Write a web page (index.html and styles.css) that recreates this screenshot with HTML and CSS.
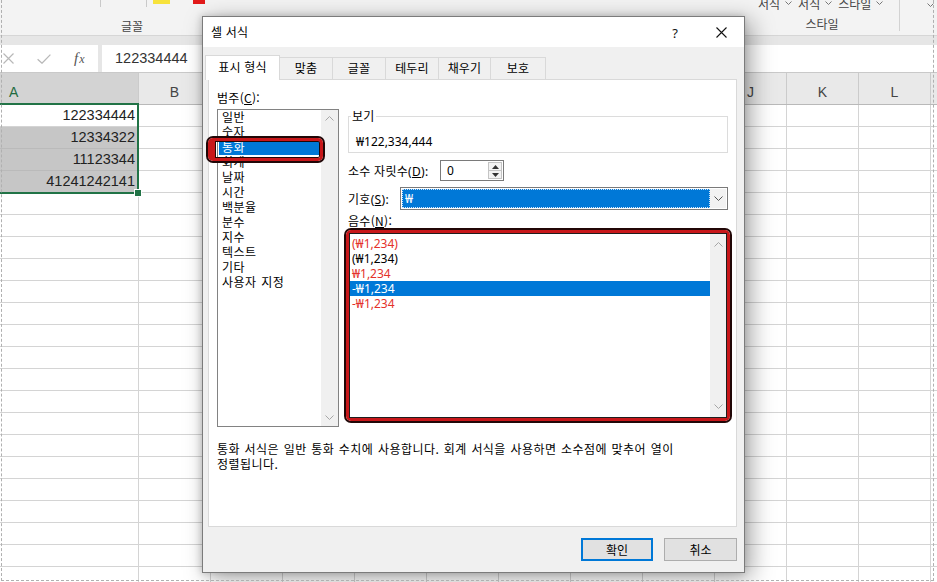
FILE: index.html
```html
<!DOCTYPE html>
<html lang="ko">
<head>
<meta charset="utf-8">
<title>셀 서식</title>
<link rel="stylesheet" href="styles.css">
</head>
<body>
<div class="app">
  <header class="ribbon">
    <div class="rg rg-font">
      <div class="rg-top">
        <span class="rsep sep1"></span>
        <span class="rsep sep2"></span>
        <span class="swatch sw-yellow"></span>
        <span class="swatch sw-red"></span>
      </div>
      <div class="rg-label">글꼴</div>
    </div>
    <div class="rg rg-mid"></div>
    <div class="rg rg-style">
      <div class="rg-top style-cmds">
        <span class="cmd">서식</span>
        <svg class="dd" width="7" height="4" viewBox="0 0 7 4"><polyline points="0.5,0.5 3.5,3.5 6.5,0.5" fill="none" stroke="#777" stroke-width="1"/></svg>
        <span class="cmd">서식</span>
        <svg class="dd" width="7" height="4" viewBox="0 0 7 4"><polyline points="0.5,0.5 3.5,3.5 6.5,0.5" fill="none" stroke="#777" stroke-width="1"/></svg>
        <span class="cmd">스타일</span>
        <svg class="dd" width="7" height="4" viewBox="0 0 7 4"><polyline points="0.5,0.5 3.5,3.5 6.5,0.5" fill="none" stroke="#777" stroke-width="1"/></svg>
      </div>
      <div class="rg-label">스타일</div>
    </div>
    <div class="rg rg-rest">
      <div class="rg-top rest-top">
        <svg class="dd" width="7" height="4" viewBox="0 0 7 4"><polyline points="0.5,0.5 3.5,3.5 6.5,0.5" fill="none" stroke="#777" stroke-width="1"/></svg>
      </div>
    </div>
  </header>

  <div class="band"></div>

  <div class="fbar">
    <div class="fctrl">
      <svg class="fi-x" width="11" height="11" viewBox="0 0 11 11"><path d="M0.5 0.5 L10.5 10.5 M10.5 0.5 L0.5 10.5" stroke="#b8b8b8" stroke-width="1.2" fill="none"/></svg>
      <svg class="fi-ok" width="14" height="10" viewBox="0 0 14 10"><path d="M0.6 5.2 L5 9.2 L13.4 0.6" stroke="#b8b8b8" stroke-width="1.3" fill="none"/></svg>
      <span class="fx"><i>f</i><i class="fx-x">x</i></span>
    </div>
    <div class="finput">122334444</div>
  </div>

  <div class="colhdr">
    <div class="ch ch-a">A</div>
    <div class="ch">B</div>
    <div class="ch">C</div>
    <div class="ch">D</div>
    <div class="ch">E</div>
    <div class="ch">F</div>
    <div class="ch">G</div>
    <div class="ch">H</div>
    <div class="ch">I</div>
    <div class="ch">J</div>
    <div class="ch">K</div>
    <div class="ch">L</div>
    <div class="ch">M</div>
  </div>

  <div class="sheet">
    <div class="col-a">
      <div class="sel">
        <div class="cell">122334444</div>
        <div class="cell shade">12334322</div>
        <div class="cell shade">11123344</div>
        <div class="cell shade">41241242141</div>
        <span class="fill-handle"></span>
      </div>
      <div class="col-a-rest"></div>
    </div>
    <div class="sheet-rest"></div>
  </div>

  <div class="dialog">
    <div class="dlg-title">
      <span class="dlg-caption">셀 서식</span>
      <span class="tb-btn help">?</span>
      <span class="tb-btn close"><svg width="11" height="11" viewBox="0 0 11 11"><path d="M0.5 0.5 L10.5 10.5 M10.5 0.5 L0.5 10.5" stroke="#111" stroke-width="1.1" fill="none"/></svg></span>
    </div>
    <div class="dlg-body">
      <div class="tabs">
        <div class="tab active t1">표시 형식</div>
        <div class="tab t2">맞춤</div>
        <div class="tab t3">글꼴</div>
        <div class="tab t4">테두리</div>
        <div class="tab t5">채우기</div>
        <div class="tab t6">보호</div>
      </div>
      <div class="panel">
        <div class="top">
          <div class="cat-col">
            <div class="lbl">범주(<u>C</u>):</div>
            <div class="listbox cat">
              <div class="items">
                <div class="item">일반</div>
                <div class="item">숫자</div>
                <div class="item selected">통화</div>
                <div class="item">회계</div>
                <div class="item">날짜</div>
                <div class="item">시간</div>
                <div class="item">백분율</div>
                <div class="item">분수</div>
                <div class="item">지수</div>
                <div class="item">텍스트</div>
                <div class="item">기타</div>
                <div class="item">사용자 지정</div>
              </div>
              <div class="vscroll">
                <svg width="9" height="5" viewBox="0 0 9 5"><polyline points="0.5,4.5 4.5,0.5 8.5,4.5" fill="none" stroke="#a6a6a6" stroke-width="1"/></svg>
                <svg width="9" height="5" viewBox="0 0 9 5"><polyline points="0.5,0.5 4.5,4.5 8.5,0.5" fill="none" stroke="#a6a6a6" stroke-width="1"/></svg>
              </div>
              <div class="mark mark-cat"></div>
            </div>
          </div>
          <div class="opt-col">
            <div class="group">
              <span class="legend">보기</span>
              <div class="gval">₩122,334,444</div>
            </div>
            <div class="frow">
              <span class="flbl">소수 자릿수(<u>D</u>):</span>
              <div class="spin">
                <span class="spin-val">0</span>
                <div class="spin-btns">
                  <span class="sb"><svg width="7" height="4" viewBox="0 0 7 4"><polygon points="0,4 3.5,0 7,4" fill="#333"/></svg></span>
                  <span class="sb"><svg width="7" height="4" viewBox="0 0 7 4"><polygon points="0,0 3.5,4 7,0" fill="#333"/></svg></span>
                </div>
              </div>
            </div>
            <div class="frow sym">
              <span class="flbl">기호(<u>S</u>):</span>
              <div class="combo">
                <div class="combo-val">₩</div>
                <div class="combo-btn"><svg width="9" height="5" viewBox="0 0 9 5"><polyline points="0.5,0.5 4.5,4.5 8.5,0.5" fill="none" stroke="#555" stroke-width="1"/></svg></div>
              </div>
            </div>
            <div class="lbl neg-lbl">음수(<u>N</u>):</div>
            <div class="mark mark-neg">
              <div class="listbox neg">
                <div class="items">
                  <div class="item red">(₩1,234)</div>
                  <div class="item">(₩1,234)</div>
                  <div class="item red">₩1,234</div>
                  <div class="item selected">-₩1,234</div>
                  <div class="item red">-₩1,234</div>
                </div>
                <div class="vscroll">
                  <svg width="9" height="5" viewBox="0 0 9 5"><polyline points="0.5,4.5 4.5,0.5 8.5,4.5" fill="none" stroke="#a6a6a6" stroke-width="1"/></svg>
                  <svg width="9" height="5" viewBox="0 0 9 5"><polyline points="0.5,0.5 4.5,4.5 8.5,0.5" fill="none" stroke="#a6a6a6" stroke-width="1"/></svg>
                </div>
              </div>
            </div>
          </div>
        </div>
        <p class="desc">통화 서식은 일반 통화 수치에 사용합니다. 회계 서식을 사용하면 소수점에 맞추어 열이<br>정렬됩니다.</p>
      </div>
      <div class="buttons">
        <button class="btn default">확인</button>
        <button class="btn">취소</button>
      </div>
    </div>
  </div>

  <div class="frame"></div>
</div>
</body>
</html>
```

FILE: styles.css
```css
* { box-sizing: border-box; margin: 0; padding: 0; }
html, body { width: 937px; height: 582px; overflow: hidden; background: #fff; }
body { font-family: "Noto Sans", "Noto Sans CJK KR", sans-serif; font-size: 12px; color: #000; }
.app { position: relative; width: 937px; height: 582px; overflow: hidden; background: #fff; }

/* ribbon */
.ribbon { display: flex; height: 36px; background: #f3f3f3; border-bottom: 1px solid #d6d6d6; }
.rg { display: flex; flex-direction: column; flex: none; }
.rg-font { width: 264px; }
.rg-mid { width: 481px; }
.rg-style { width: 155px; height: 31px; border-right: 1px solid #d2d2d2; }
.rg-rest { flex: 1; }
.rg-top { height: 19px; display: flex; align-items: flex-start; }
.rg-label { font-family: "Noto Sans CJK KR", sans-serif; font-size: 12px; line-height: 14px; text-align: center; color: #444; }
.rsep { width: 1px; height: 7px; background: #c9c9c9; }
.sep1 { margin-left: 100px; }
.sep2 { margin-left: 45px; }
.swatch { height: 4px; }
.sw-yellow { margin-left: 6px; width: 17px; background: #f7e23b; }
.sw-red { margin-left: 23px; width: 12px; background: #e21a1a; }
.style-cmds { height: 30px; margin-top: -11px; align-items: center; padding-left: 13px; font-family: "Noto Sans CJK KR", sans-serif; font-size: 12px; color: #444; }
.style-cmds .dd { margin: 0 6px 0 5px; }
.rest-top { padding-left: 27px; padding-top: 3px; }

/* formula bar */
.band { height: 9px; background: #e6e6e6; }
.fbar { display: flex; height: 27px; background: #e6e6e6; }
.fctrl { width: 98px; background: #fff; display: flex; align-items: center; }
.fi-x { margin-left: 3px; }
.fi-ok { margin-left: 23px; }
.fx { margin-left: 23px; font-family: "Liberation Serif", serif; font-size: 15px; color: #555; }
.fx-x { font-size: 12px; margin-left: 1px; }
.finput { margin-left: 4px; flex: 1; background: #fff; padding-left: 13px; font-family: "Liberation Sans", sans-serif; font-size: 14.5px; line-height: 27px; color: #333; }

/* column header */
.colhdr { display: flex; height: 33px; background: #e9e9e9; border-top: 1px solid #c9c9c9; border-bottom: 1px solid #b9b9b9; overflow: hidden; }
.ch { flex: none; width: 72px; height: 31px; border-right: 1px solid #cbcbcb; text-align: center; font-family: "Liberation Sans", sans-serif; font-size: 14px; line-height: 24px; padding-top: 7px; color: #444; }
.ch-a { width: 139px; background: #d3d3d3; color: #1f6b40; text-align: left; padding-left: 9px; }

/* grid */
.sheet { display: flex; height: 477px; }
.col-a { width: 139px; flex: none; border-right: 1px solid #d4d4d4; display: flex; flex-direction: column; }
.sel { position: relative; }
.sel::after { content: ""; position: absolute; left: -3px; top: -2px; right: -1px; bottom: -1px; border: 2px solid #217346; pointer-events: none; }
.cell { height: 22px; border-bottom: 1px solid #d4d4d4; text-align: right; padding-right: 3px; font-family: "Liberation Sans", sans-serif; font-size: 14.5px; line-height: 21px; color: #222; }
.shade { background: #c6c6c6; border-bottom-color: #bababa; }
.fill-handle { position: absolute; left: 135px; top: 85px; width: 6px; height: 6px; background: #217346; outline: 1px solid #fff; z-index: 2; }
.col-a-rest { flex: 1; background: repeating-linear-gradient(to bottom, transparent 0 21px, #d4d4d4 21px 22px); }
.sheet-rest { flex: 1; background-image: repeating-linear-gradient(to bottom, transparent 0 21px, #d4d4d4 21px 22px), repeating-linear-gradient(to right, transparent 0 71px, #d4d4d4 71px 72px); }

/* dialog */
.dialog { position: absolute; left: 202px; top: 16px; width: 543px; height: 557px; background: #f0f0f0; border: 1px solid #7b7b7b; box-shadow: 6px 5px 22px rgba(0,0,0,0.36), -1px 0 7px rgba(0,0,0,0.18); display: flex; flex-direction: column; font-family: "Noto Sans", "Noto Sans CJK KR", sans-serif; }
.dlg-title { height: 30px; flex: none; background: #fff; display: flex; align-items: center; }
.dlg-caption { flex: 1; padding-left: 8px; font-family: "Noto Sans CJK KR", sans-serif; font-size: 12px; line-height: 16px; letter-spacing: 0.2px; }
.tb-btn { width: 46px; height: 30px; display: flex; align-items: center; justify-content: center; }
.help { font-family: "Noto Sans", sans-serif; font-size: 13px; color: #111; padding-top: 2px; }
.dlg-body { flex: 1; display: flex; flex-direction: column; padding: 8px 7px 0 5px; }

.tabs { display: flex; height: 24px; align-items: flex-end; flex: none; position: relative; z-index: 1; }
.tab { height: 22px; border: 1px solid #d9d9d9; border-bottom: none; margin-left: -1px; background: #f0f0f0; text-align: center; font-family: "Noto Sans CJK KR", sans-serif; font-size: 12px; line-height: 20px; letter-spacing: 0.2px; }
.tab.active { height: 25px; background: #fff; margin-left: -3px; margin-bottom: -1px; padding-top: 1px; position: relative; z-index: 2; }
.t1 { width: 75px; }
.t2 { width: 54px; }
.t3 { width: 54px; }
.t4 { width: 54px; }
.t5 { width: 53px; }
.t6 { width: 56px; }

.panel { height: 448px; flex: none; background: #fff; border: 1px solid #d9d9d9; padding: 10px 8px 0 8px; }
.top { display: flex; align-items: flex-start; }
.cat-col { width: 122px; flex: none; }
.lbl { line-height: 16px; font-family: "Noto Sans CJK KR", sans-serif; letter-spacing: 0.3px; }
.listbox { position: relative; display: flex; background: #fff; border: 1px solid #828282; }
.cat { height: 318px; margin-top: 3px; }
.cat .items { padding-left: 1px; }
.cat .item { letter-spacing: 0.5px; word-spacing: 1px; padding-left: 3px; }
.items { flex: 1; }
.item { line-height: 15px; padding-left: 2px; white-space: nowrap; font-size: 12px; }
.item.selected { background: #0078d7; color: #fff; }
.item.red { color: #e4312b; }
.vscroll { width: 17px; flex: none; background: #f0f0f0; display: flex; flex-direction: column; justify-content: space-between; align-items: center; padding: 6px 0; }
.vscroll svg { display: block; }

.mark { border: 3px solid #c8171a; border-radius: 5px; box-shadow: 0 0 0 2px #210707, inset 0 0 0 1px #210707; }
.mark-cat { position: absolute; left: -10px; top: 28px; width: 115px; height: 23px; border-left-width: 7px; }

.opt-col { width: 380px; margin-left: 9px; flex: none; }
.group { margin-top: 26px; height: 37px; border: 1px solid #dcdcdc; }
.legend { display: block; width: max-content; margin: -9px 0 0 2px; padding: 0 1px; background: #fff; line-height: 15px; font-family: "Noto Sans CJK KR", sans-serif; letter-spacing: 0.3px; }
.gval { margin-top: 11px; padding-left: 7px; line-height: 15px; }

.frow { display: flex; align-items: center; margin-top: 7px; height: 21px; }
.flbl { width: 92px; flex: none; font-family: "Noto Sans", "Noto Sans CJK KR", sans-serif; letter-spacing: 0.3px; }
.spin { width: 64px; height: 21px; border: 1px solid #7a7a7a; display: flex; background: #fff; }
.spin-val { flex: 1; padding-left: 6px; line-height: 19px; }
.spin-btns { width: 15px; display: flex; flex-direction: column; padding: 1px 1px 1px 0; }
.sb { flex: 1; display: flex; align-items: center; justify-content: center; background: #f3f3f3; border: 1px solid #c4c4c4; }
.sb + .sb { border-top: none; }
.sb svg { display: block; }

.sym { margin-top: 6px; height: 23px; }
.sym .flbl { width: 52px; }
.combo { flex: 1; height: 23px; border: 1px solid #7a7a7a; display: flex; background: #fff; padding: 1px; }
.combo-val { flex: 1; background: #0078d7; color: #fff; border: 1px dotted #cfe3f7; padding-left: 2px; line-height: 17px; }
.combo-btn { width: 16px; flex: none; display: flex; align-items: center; justify-content: center; background: #f2f2f2; }

.neg-lbl { margin-top: 3px; line-height: 15px; }
.mark-neg { margin: 2px -2px 0 -2px; height: 191px; }
.neg { height: 100%; border-color: #1e1e1e; }
.neg .items { padding-top: 2px; }
.neg .vscroll { width: 16px; padding: 8px 0; }

.desc { margin-top: 14px; line-height: 15px; font-family: "Noto Sans CJK KR", sans-serif; font-size: 12px; letter-spacing: 0.45px; word-spacing: 0.8px; }

.buttons { display: flex; justify-content: flex-end; gap: 11px; margin-top: 11px; }
.btn { width: 73px; height: 23px; border: 1px solid #adadad; background: #e1e1e1; font-family: "Noto Sans CJK KR", sans-serif; font-size: 12px; color: #000; }
.btn.default { width: 72px; border: 2px solid #0078d7; }

/* page-break style dashed frame */
.frame { position: absolute; left: 1px; top: 0; width: 933px; height: 581px; border-left: 1px dashed #b0b0b0; border-right: 1px dashed #b0b0b0; border-bottom: 1px dashed #b0b0b0; pointer-events: none; }
```
